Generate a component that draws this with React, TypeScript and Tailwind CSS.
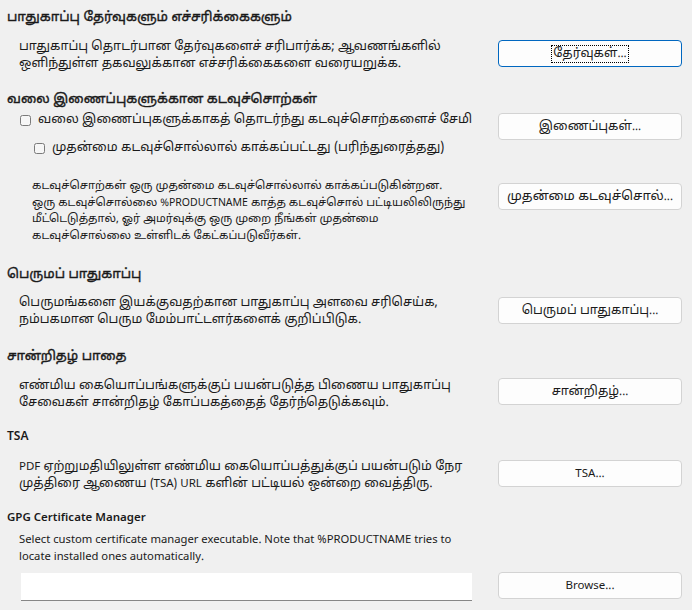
import { useState } from "react";

// latin runs are set smaller than the tamil around them
function L({ children }: { children: string }) {
  return <span className="text-[11.5px] leading-none">{children}</span>;
}

function Btn({
  label,
  latin,
  primary,
  size = "text-[12.6px]",
}: {
  label: string;
  latin?: boolean;
  primary?: boolean;
  size?: string;
}) {
  return (
    <button
      className={`flex h-[27px] w-[184px] shrink-0 items-center justify-center whitespace-nowrap rounded-[4px] bg-[#fdfdfd] leading-[16px] text-[#1b1b1b] ${
        latin ? "text-[11.5px]" : size
      } ${primary ? "border border-[#0067c0]" : "border border-[#d3d3d3]"}`}
    >
      <span className={primary ? "border border-dotted border-black px-[1px]" : ""}>
        {label}
        {!latin && <span className="text-[11.5px] leading-none">...</span>}
      </span>
    </button>
  );
}

function Check({ label, checked, onChange }: { label: string; checked: boolean; onChange: () => void }) {
  return (
    <label className="flex h-[17px] items-center gap-[7px] whitespace-nowrap" onClick={onChange}>
      <span className="flex h-[11px] w-[11px] shrink-0 items-center justify-center rounded-[2.5px] border border-[#7a7a7a] bg-[#f6f6f6]">
        {checked && <span className="text-[8px] leading-none">✓</span>}
      </span>
      <span className="text-[12.7px] leading-[17px]">{label}</span>
    </label>
  );
}

function Heading({ children, className = "" }: { children: React.ReactNode; className?: string }) {
  return (
    <h3 className={`whitespace-nowrap text-[13.3px] font-normal leading-[17px] [-webkit-text-stroke:0.4px] ${className}`}>
      {children}
    </h3>
  );
}

export default function App() {
  const [savePw, setSavePw] = useState(false);
  const [master, setMaster] = useState(false);

  return (
    <div
      className="min-h-[610px] w-[692px] bg-[#f0f0f0] pl-[7px] pr-[10px] pt-[9px] text-[12.6px] leading-[17px] text-[#1a1a1a]"
      style={{ fontFamily: '"Noto Sans Tamil UI", "Noto Sans Tamil", "Noto Sans", "Liberation Sans", sans-serif' }}
    >
      <Heading>பாதுகாப்பு தேர்வுகளும் எச்சரிக்கைகளும்</Heading>
      <div className="mt-[13px] flex items-start">
        <p className="whitespace-nowrap pl-[12px]">
          பாதுகாப்பு தொடர்பான தேர்வுகளைச் சரிபார்க்க; ஆவணங்களில்
          <br />
          ஒளிந்துள்ள தகவலுக்கான எச்சரிக்கைகளை வரையறுக்க.
        </p>
        <div className="ml-auto pt-[1px]">
          <Btn label="தேர்வுகள்" primary />
        </div>
      </div>

      <Heading className="mt-[18px]">வலை இணைப்புகளுக்கான கடவுச்சொற்கள்</Heading>
      <div className="mt-[4px] flex items-start">
        <div className="flex flex-col gap-[11px] pl-[13px]">
          <Check
            label="வலை இணைப்புகளுக்காகத் தொடர்ந்து கடவுச்சொற்களைச் சேமி"
            checked={savePw}
            onChange={() => setSavePw(!savePw)}
          />
          <div className="pl-[14px]">
            <Check
              label="முதன்மை கடவுச்சொல்லால் காக்கப்பட்டது (பரிந்துரைத்தது)"
              checked={master}
              onChange={() => setMaster(!master)}
            />
          </div>
        </div>
        <div className="ml-auto pt-[1px]">
          <Btn label="இணைப்புகள்" />
        </div>
      </div>
      <div className="mt-[21px] flex items-start">
        <p className="whitespace-nowrap pl-[25px] text-[11.4px] leading-[16.5px]">
          கடவுச்சொற்கள் ஒரு முதன்மை கடவுச்சொல்லால் காக்கப்படுகின்றன.
          <br />
          ஒரு கடவுச்சொல்லை <span className="text-[10.5px] leading-none">%PRODUCTNAME</span> காத்த கடவுச்சொல் பட்டியலிலிருந்து
          <br />
          மீட்டெடுத்தால், ஓர் அமர்வுக்கு ஒரு முறை நீங்கள் முதன்மை
          <br />
          கடவுச்சொல்லை உள்ளிடக் கேட்கப்படுவீர்கள்.
        </p>
        <div className="ml-auto pt-[5px]">
          <Btn label="முதன்மை கடவுச்சொல்" size="text-[13.1px]" />
        </div>
      </div>

      <Heading className="mt-[22px]">பெருமப் பாதுகாப்பு</Heading>
      <div className="mt-[12px] flex items-start">
        <p className="whitespace-nowrap pl-[12px]">
          பெருமங்களை இயக்குவதற்கான பாதுகாப்பு அளவை சரிசெய்க,
          <br />
          நம்பகமான பெரும மேம்பாட்டளர்களைக் குறிப்பிடுக.
        </p>
        <div className="ml-auto pt-[2px]">
          <Btn label="பெருமப் பாதுகாப்பு" />
        </div>
      </div>

      <Heading className="mt-[19px]">சான்றிதழ் பாதை</Heading>
      <div className="mt-[13px] flex items-start">
        <p className="whitespace-nowrap pl-[12px]">
          எண்மிய கையொப்பங்களுக்குப் பயன்படுத்த பிணைய பாதுகாப்பு
          <br />
          சேவைகள் சான்றிதழ் கோப்பகத்தைத் தேர்ந்தெடுக்கவும்.
        </p>
        <div className="ml-auto">
          <Btn label="சான்றிதழ்" />
        </div>
      </div>

      <h3 className="mt-[17px] text-[12px] font-semibold leading-[17px]">TSA</h3>
      <div className="mt-[13px] flex items-start">
        <p className="whitespace-nowrap pl-[12px]">
          <L>PDF</L> ஏற்றுமதியிலுள்ள எண்மிய கையொப்பத்துக்குப் பயன்படும் நேர
          <br />
          முத்திரை ஆணைய <L>(TSA) URL</L> களின் பட்டியல் ஒன்றை வைத்திரு.
        </p>
        <div className="ml-auto pt-[1px]">
          <Btn label="TSA..." latin />
        </div>
      </div>

      <h3 className="mt-[17px] text-[11.5px] font-semibold leading-[17px]">GPG Certificate Manager</h3>
      <p className="mt-[5px] pl-[12px] text-[11.25px]">
        Select custom certificate manager executable. Note that %PRODUCTNAME tries to
        <br />
        locate installed ones automatically.
      </p>
      <div className="mt-[6px] flex items-start">
        <div className="ml-[14px] mt-[1px] h-[28px] w-[451px] border-b border-[#868686] bg-white" />
        <div className="ml-auto">
          <Btn label="Browse..." latin />
        </div>
      </div>
    </div>
  );
}
